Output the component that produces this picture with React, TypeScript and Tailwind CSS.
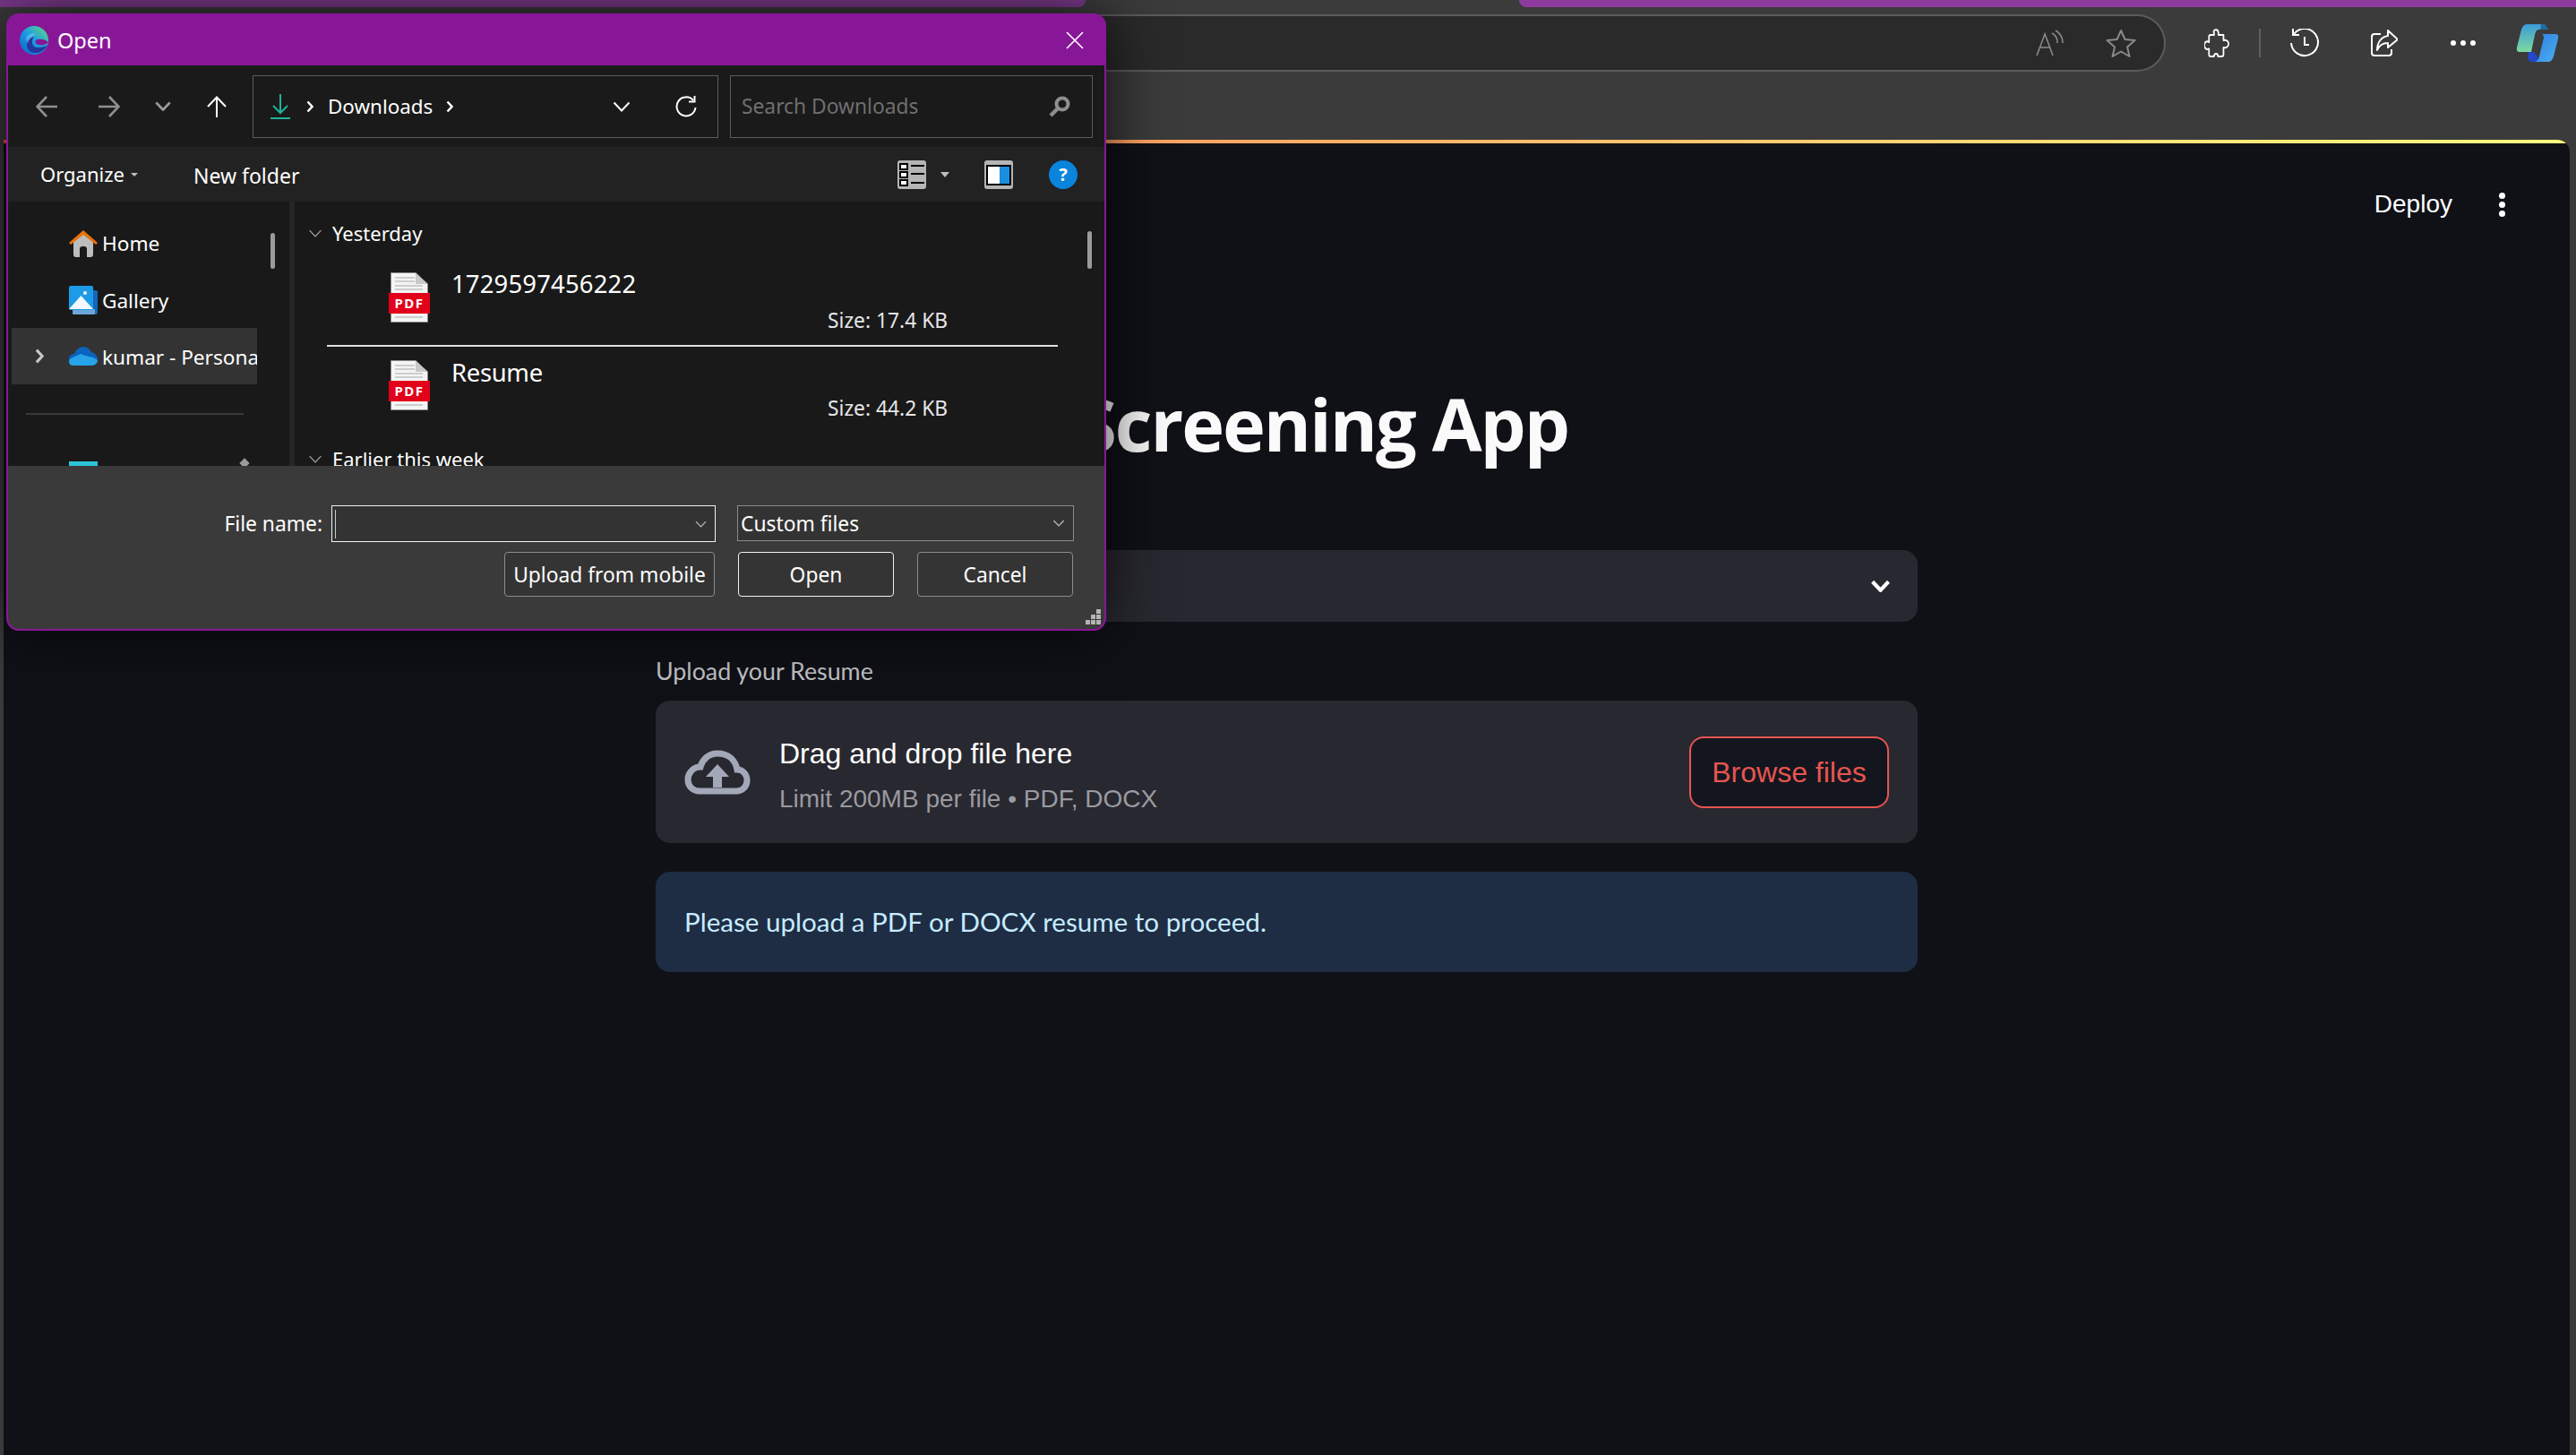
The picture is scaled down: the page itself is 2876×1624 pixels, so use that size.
function Chevron({ className = "", stroke = "currentColor", width = 2 }: { className?: string; stroke?: string; width?: number }) {
  return (
    <svg className={className} viewBox="0 0 20 12" fill="none">
      <path d="M1.5 1.5 10 10.5 18.5 1.5" stroke={stroke} strokeWidth={width} />
    </svg>
  );
}

function ChevronRight({ className = "" }: { className?: string }) {
  return (
    <svg className={className} viewBox="0 0 8 14" fill="none">
      <path d="M1.5 1.5 6.5 7 1.5 12.5" stroke="currentColor" strokeWidth="2.4" />
    </svg>
  );
}

function EdgeLogo() {
  return (
    <svg className="w-[32px] h-[32px]" viewBox="0 0 32 32">
      <defs>
        <linearGradient id="edgeA" x1="0" y1="1" x2="1" y2="0">
          <stop offset="0" stopColor="#0b62c4" />
          <stop offset="0.5" stopColor="#1b9de2" />
          <stop offset="1" stopColor="#63dd7c" />
        </linearGradient>
      </defs>
      <circle cx="16" cy="16" r="16" fill="url(#edgeA)" />
      <path d="M31 21C27 30 16 33 10 27 5 21 9 13 16 12 12 17 14 24 20 24 25 24 29 23 31 21Z" fill="#23389f" />
      <path d="M32 18C30 21 25 22 21 21 17 20 16 16 20 15 24 14 29 15 32 18Z" fill="#881798" />
      <path d="M7 13C9 9 14 7 19 9 15 10 11 14 9 20 8 18 7 15 7 13Z" fill="#e8f8ff" opacity="0.25" />
    </svg>
  );
}

function HomeIcon() {
  return (
    <svg className="w-[32px] h-[30px]" viewBox="0 0 32 30">
      <path d="M5 13 16 3 27 13V27Q27 30 24 30H20V21Q20 18 17 18H15Q12 18 12 21V30H8Q5 30 5 27Z" fill="#bdbdbd" />
      <path d="M0 14 16 0 32 14 30 16 16 5 2 16Z" fill="#e8730c" />
    </svg>
  );
}

function GalleryIcon() {
  return (
    <svg className="w-[32px] h-[32px]" viewBox="0 0 32 32">
      <rect x="4" y="5" width="28" height="27" rx="2" fill="#1566b8" />
      <rect x="4" y="26" width="25" height="6" rx="1" fill="#6ea4da" />
      <rect x="0" y="0" width="27" height="27" rx="2" fill="#1e9be8" />
      <path d="M0 26 13.5 11 27 26Z" fill="#f2f8fd" />
      <circle cx="18" cy="8" r="2" fill="#f2f8fd" />
    </svg>
  );
}

function CloudIcon() {
  return (
    <svg className="w-[32px] h-[21px]" viewBox="0 0 32 21">
      <path d="M7 21C2 21 0 17 0 14 0 10 3 8 6 8 8 3 12 0 16 0 20 0 23 2 25 6 29 7 32 10 32 14 32 18 29 21 25 21Z" fill="#0a64bd" />
      <path d="M4 21C1 21 0 18 0 16 1 12 8 11 13 8 19 11 28 11 32 15 32 18 29 21 25 21Z" fill="#27a3ea" />
    </svg>
  );
}

function PdfFile() {
  return (
    <div className="relative w-[46px] h-[56px] shrink-0">
      <svg className="absolute left-[2px] top-0 w-[42px] h-[56px]" viewBox="0 0 42 56">
        <path d="M.5.5H28L41.5 13V55.5H.5Z" fill="#f4f4f4" stroke="#8b8b8b" />
        <path d="M28 .5V13H41.5Z" fill="#c9c9c9" />
        <path d="M5 6H27M5 10H27M5 15H36M5 19H36M5 50H36" stroke="#a8a8a8" strokeWidth="1" />
      </svg>
      <div className="absolute left-0 top-[23px] w-[46px] h-[23px] bg-[#e2001a] flex items-center justify-center text-white text-[15px] font-bold tracking-[1.5px] font-['Noto_Sans',sans-serif] leading-none">
        PDF
      </div>
    </div>
  );
}

function FileRow({ name, size, nameTop }: { name: string; size: string; nameTop: string }) {
  return (
    <div className="flex h-[96px] ml-[36px] w-[816px] pl-[69px]">
      <div className="mt-[15px]">
        <PdfFile />
      </div>
      <div className={`ml-[24px] w-[420px] text-[27.4px] leading-[36px] text-white ${nameTop}`}>{name}</div>
      <div className="pt-[54px] text-[22.8px] leading-[30px] text-[#e6e6e6]">{size}</div>
    </div>
  );
}

function SideRow({ icon, label, selected, textTop }: { icon: React.ReactNode; label: string; selected?: boolean; textTop: string }) {
  return (
    <div className={`flex items-center h-[63px] w-[274px] ml-[4px] overflow-hidden whitespace-nowrap ${selected ? "bg-[#333333]" : ""}`}>
      <div className="w-[64px] shrink-0 pl-[26px] text-[#c8c8c8]">{selected && <ChevronRight className="w-[10px] h-[23px]" />}</div>
      <div className="w-[32px] shrink-0 flex justify-center">{icon}</div>
      <span className={`ml-[5px] text-[22.6px] text-white ${textTop}`}>{label}</span>
    </div>
  );
}

function FileDialog() {
  return (
    <div className="absolute left-[7px] top-[15px] w-[1228px] h-[689px] rounded-[14px] border-2 border-[#881798] bg-[#881798] overflow-hidden shadow-[0_0_70px_rgba(0,0,0,0.75)] font-['Noto_Sans',sans-serif] flex flex-col">
      <div className="h-[56px] flex items-center bg-[#881798] text-white shrink-0">
        <div className="ml-[13px]">
          <EdgeLogo />
        </div>
        <span className="ml-[10px] mt-[2px] text-[23.5px]">Open</span>
        <svg className="ml-auto mr-[23px] w-[20px] h-[20px]" viewBox="0 0 20 20" fill="none">
          <path d="M1 1 19 19M19 1 1 19" stroke="white" strokeWidth="1.6" />
        </svg>
      </div>

      <div className="h-[91px] bg-[#1a1a1a] flex items-center shrink-0">
        <svg className="ml-[31px] w-[24px] h-[24px]" viewBox="0 0 24 24" fill="none" stroke="#8f8f8f" strokeWidth="2.6">
          <path d="M24 12H2M12 1 1.5 12 12 23" />
        </svg>
        <svg className="ml-[46px] w-[24px] h-[24px]" viewBox="0 0 24 24" fill="none" stroke="#8f8f8f" strokeWidth="2.6">
          <path d="M0 12H22M12 1 22.5 12 12 23" />
        </svg>
        <Chevron className="ml-[39px] w-[18px] h-[11px] text-[#9a9a9a]" width={3} />
        <svg className="ml-[40px] w-[22px] h-[24px]" viewBox="0 0 22 24" fill="none" stroke="white" strokeWidth="2">
          <path d="M11 24V2M1 12 11 1.5 21 12" />
        </svg>
        <div className="ml-[29px] w-[520px] h-[70px] border border-[#5c5c5c] flex items-center text-white">
          <svg className="ml-[19px] w-[22px] h-[28px]" viewBox="0 0 22 28" fill="none" stroke="#1fb398" strokeWidth="2">
            <path d="M11 0V21M3 13 11 21 19 13M0 27H22" />
          </svg>
          <ChevronRight className="ml-[18px] w-[8px] h-[14px]" />
          <span className="ml-[16px] text-[22.4px]">Downloads</span>
          <ChevronRight className="ml-[15px] w-[8px] h-[14px]" />
          <Chevron className="ml-auto w-[20px] h-[12px]" />
          <svg className="ml-[50px] mr-[23px] w-[24px] h-[24px]" viewBox="0 0 24 24" fill="none" stroke="white" strokeWidth="2">
            <path d="M20 5A10.5 10.5 0 1 0 22.5 13" />
            <path d="M21.5 0V6.5H15" />
          </svg>
        </div>
        <div className="ml-[13px] w-[405px] h-[70px] border border-[#5c5c5c] flex items-center">
          <span className="ml-[12px] mt-[2px] text-[22.8px] text-[#6f6f6f]">Search Downloads</span>
          <svg className="ml-auto mr-[24px] w-[24px] h-[24px]" viewBox="0 0 24 24" fill="none" stroke="#8e8e8e">
            <circle cx="15" cy="9" r="6.5" strokeWidth="4" />
            <path d="M10 14 2 22" strokeWidth="4.5" />
          </svg>
        </div>
      </div>

      <div className="h-[61px] bg-[#222222] flex items-center text-[23px] text-white shrink-0">
        <span className="ml-[36px] text-[22px]">Organize</span>
        <div className="ml-[7px] w-0 h-0 border-x-[4px] border-x-transparent border-t-[4px] border-t-[#bdbdbd]" />
        <span className="ml-[62px] mt-[3px]">New folder</span>
        <svg className="ml-auto w-[32px] h-[32px]" viewBox="0 0 32 32">
          <rect width="32" height="32" rx="3" fill="#b5b5b5" />
          <g fill="#ffffff" stroke="#000000" strokeWidth="2">
            <rect x="3" y="4" width="8" height="6" />
            <rect x="3" y="13" width="8" height="6" />
            <rect x="3" y="22" width="8" height="6" />
          </g>
          <path d="M15 6H30M15 15H30M15 25H30" stroke="#000000" strokeWidth="2" />
        </svg>
        <div className="ml-[16px] w-0 h-0 border-x-[5px] border-x-transparent border-t-[6px] border-t-[#bdbdbd]" />
        <svg className="ml-[39px] w-[32px] h-[32px]" viewBox="0 0 32 32">
          <rect width="32" height="32" rx="3" fill="#b5b5b5" />
          <rect x="2" y="5" width="28" height="23" fill="#000000" />
          <rect x="4" y="7" width="13" height="19" fill="#ffffff" />
          <rect x="17" y="7" width="11" height="19" fill="#1a8fe0" />
        </svg>
        <div className="ml-[40px] mr-[30px] w-[32px] h-[32px] rounded-full bg-[#0a84dc] flex items-center justify-center text-white text-[20px] font-bold leading-none">
          ?
        </div>
      </div>

      <div className="h-[295px] bg-[#191919] flex shrink-0 overflow-hidden text-white">
        <div className="relative w-[314px] shrink-0 pt-[15px]">
          <SideRow icon={<HomeIcon />} label="Home" textTop="mt-0" />
          <SideRow icon={<GalleryIcon />} label="Gallery" textTop="mt-[2px]" />
          <SideRow icon={<CloudIcon />} label="kumar - Personal" textTop="mt-[2px]" selected />
          <div className="mt-[32px] ml-[20px] w-[243px] h-[2px] bg-[#3a3a3a]" />
          <div className="mt-[52px] ml-[4px] flex items-center h-[32px] whitespace-nowrap">
            <div className="ml-[64px] w-[32px] h-[32px] bg-[#2ec4d8]" />
            <span className="ml-[6px] -mt-[6px] text-[22.6px]">Desktop</span>
          </div>
          <div className="absolute left-[293px] top-[35px] w-[5px] h-[40px] rounded-full bg-[#9b9b9b]" />
          <div className="absolute left-[260px] top-[288px] w-[8px] h-[8px] rotate-45 bg-[#9b9b9b]" />
        </div>
        <div className="w-[6px] shrink-0 bg-[#262626]" />
        <div className="relative flex-1 pt-[20px] whitespace-nowrap">
          <div className="flex items-center h-[30px] pl-[15px] text-[22px] text-white">
            <Chevron className="w-[16px] h-[9px] text-[#a8a8a8]" width={1.6} />
            <span className="ml-[11px]">Yesterday</span>
          </div>
          <div className="mt-[14px]">
            <FileRow name="1729597456222" size="Size: 17.4 KB" nameTop="pt-[10px] tracking-[0.2px]" />
            <div className="ml-[36px] w-[816px] h-[2px] bg-[#e0e0e0]" />
            <FileRow name="Resume" size="Size: 44.2 KB" nameTop="pt-[11px] tracking-[-0.3px]" />
          </div>
          <div className="mt-[14px] flex items-center h-[30px] pl-[15px] text-[22px] text-white">
            <Chevron className="w-[16px] h-[9px] text-[#a8a8a8]" width={1.6} />
            <span className="ml-[11px]">Earlier this week</span>
          </div>
          <div className="absolute left-[885px] top-[33px] w-[5px] h-[42px] rounded-full bg-[#9b9b9b]" />
        </div>
      </div>

      <div className="relative h-[182px] bg-[#3a3a3a] pt-[44px] text-[22.8px] text-white shrink-0 rounded-b-[12px]">
        <div className="flex items-start">
          <div className="w-[351px] h-[41px] pt-[2px] flex items-center justify-end">File name:</div>
          <div className="relative ml-[10px] w-[429px] h-[41px] border border-[#f2f2f2] bg-[#333333] flex items-center">
            <div className="ml-[3px] w-[1px] h-[32px] bg-[#c8c8c8]" />
            <Chevron className="ml-auto mr-[9px] w-[13px] h-[8px] text-[#bdbdbd]" width={1.8} />
          </div>
          <div className="ml-[24px] w-[376px] h-[40px] border border-[#8c8c8c] bg-[#333333] flex items-center">
            <span className="ml-[3px] mt-[2px]">Custom files</span>
            <Chevron className="ml-auto mr-[9px] w-[14px] h-[8px] text-[#bdbdbd]" width={1.8} />
          </div>
        </div>
        <div className="flex mt-[11px] ml-[554px]">
          <div className="w-[235px] h-[50px] pt-[2px] rounded-[4px] border border-[#8c8c8c] bg-[#343434] flex items-center justify-center">Upload from mobile</div>
          <div className="ml-[26px] w-[174px] h-[50px] pt-[2px] rounded-[4px] border border-[#f2f2f2] bg-[#343434] flex items-center justify-center">Open</div>
          <div className="ml-[26px] w-[174px] h-[50px] pt-[2px] rounded-[4px] border border-[#8c8c8c] bg-[#343434] flex items-center justify-center">Cancel</div>
        </div>
        <svg className="absolute right-[4px] bottom-[5px] w-[17px] h-[17px]" viewBox="0 0 17 17" fill="#b5b5b5">
          <rect x="12" y="0" width="5" height="5" />
          <rect x="6" y="6" width="5" height="5" />
          <rect x="12" y="6" width="5" height="5" />
          <rect x="0" y="12" width="5" height="5" />
          <rect x="6" y="12" width="5" height="5" />
          <rect x="12" y="12" width="5" height="5" />
        </svg>
      </div>
    </div>
  );
}

function BrowserTools() {
  return (
    <div className="flex items-center text-white">
      <svg className="w-[28px] h-[32px]" viewBox="0 0 32 32" preserveAspectRatio="none" fill="none" stroke="white" strokeWidth="2" strokeLinejoin="round">
        <path d="M12 3C13 0 18 1 18 4.5V7H24.5V13C28 12 31 14 31 17S28 22 24.5 21V29Q24.5 31 22 31H17.5C18 27 12 27 12.5 31H8Q6 31 6 29V22.5C2 24 0 21 0 18.5S2 13 6 15V9Q6 7 8 7H12.5C13 5.5 12 4.5 12 3Z" />
      </svg>
      <div className="ml-[33px] w-[2px] h-[32px] bg-[#5f5f5f]" />
      <svg className="ml-[33px] w-[32px] h-[32px]" viewBox="0 0 32 32" fill="none" stroke="white" strokeWidth="2">
        <path d="M4 6A15 15 0 1 1 1 16" />
        <path d="M3 0V7H10M16 9V18H21" />
      </svg>
      <svg className="ml-[58px] w-[30px] h-[30px]" viewBox="0 0 30 30" fill="none" stroke="white" strokeWidth="2" strokeLinejoin="round">
        <path d="M11 5H4Q1 5 1 8V26Q1 29 4 29H20Q23 29 23 26V22" />
        <path d="M19 1 30 11 19 20V15C13 15 9 18 7 23 7 14 12 8 19 7Z" />
      </svg>
      <div className="ml-[59px] flex gap-[5px]">
        <div className="w-[6px] h-[6px] rounded-full bg-white" />
        <div className="w-[6px] h-[6px] rounded-full bg-white" />
        <div className="w-[6px] h-[6px] rounded-full bg-white" />
      </div>
      <svg className="ml-[45px] w-[48px] h-[42px]" viewBox="0 0 48 42">
        <defs>
          <linearGradient id="copA" x1="0" y1="0" x2="0" y2="1">
            <stop offset="0" stopColor="#3a9bd8" />
            <stop offset="1" stopColor="#7ed9a0" />
          </linearGradient>
          <linearGradient id="copB" x1="0" y1="0" x2="1" y2="1">
            <stop offset="0" stopColor="#2f7fe0" />
            <stop offset="1" stopColor="#4ab0f0" />
          </linearGradient>
        </defs>
        <path d="M12 0H32L36 6 26 6C23 6 22 8 21 12L17 31H4Q0 31 1 26L6 6Q8 0 12 0Z" fill="url(#copA)" />
        <path d="M28 0H32L36 6 H27Z" fill="#1f6d9e" />
        <path d="M14 31H20L24 36 C25 40 26 42 24 42H18Q14 42 13 37Z" fill="#2446c8" />
        <path d="M29 11H44Q48 11 47 16L42 36Q40 42 36 42H20C23 42 25 40 26 36L31 15C31 13 30 12 29 11Z" fill="url(#copB)" />
      </svg>
    </div>
  );
}

export default function App() {
  return (
    <div className="relative w-[2876px] h-[1624px] overflow-hidden bg-[#3b3b3b] font-['Liberation_Sans',Arial,sans-serif]">
      <div className="flex h-[8px] justify-between">
        <div className="w-[1212px] rounded-br-[10px] bg-[#7d3a8e]" />
        <div className="w-[1180px] rounded-bl-[10px] bg-[#8e3b9f]" />
      </div>
      <div className="flex items-center h-[64px] mt-[8px]">
        <div className="ml-[700px] w-[1718px] h-[64px] rounded-r-[32px] border-y-2 border-r-2 border-[#5b5b5b] bg-[#2a2a2a] flex items-center justify-end">
          <svg className="w-[31px] h-[30px]" viewBox="0 0 31 30" fill="none" stroke="#8a8a8a" strokeWidth="1.6">
            <path d="M1 29 10 5 19 29M4 20H16" />
            <path d="M18 4C22 6 24 10 24 15M22 1C27 4 30 9 30 15" />
          </svg>
          <svg className="ml-[47px] mr-[31px] w-[34px] h-[32px]" viewBox="0 0 34 32" fill="none" stroke="#8a8a8a" strokeWidth="2" strokeLinejoin="round">
            <path d="M17 2 21.5 12 32.5 13 24 20.5 26.5 31 17 25.5 7.5 31 10 20.5 1.5 13 12.5 12Z" />
          </svg>
        </div>
        <div className="ml-[43px]">
          <BrowserTools />
        </div>
      </div>

      <div className="mt-[76px] ml-[4px] mr-[7px] h-[1468px] rounded-tr-[14px] overflow-hidden bg-[#0f1117] text-[#fafafa]">
        <div className="h-[4px] bg-gradient-to-r from-[#ff4b4b] to-[#fffd80]" />
        <div className="flex items-center justify-end h-[136px] pr-[72px]">
          <span className="text-[28px] text-white">Deploy</span>
          <div className="ml-[52px] flex flex-col gap-[3px]">
            <div className="w-[7px] h-[7px] rounded-full bg-white" />
            <div className="w-[7px] h-[7px] rounded-full bg-white" />
            <div className="w-[7px] h-[7px] rounded-full bg-white" />
          </div>
        </div>
        <div className="mx-auto w-[1409px]">
          <div className="h-[318px] pt-[122px]">
            <h1 className="w-[1019px] text-right text-[81px] leading-[110px] tracking-[-0.025em] font-bold text-[#fafafa] font-['Open_Sans',sans-serif] whitespace-nowrap">
              Screening App
            </h1>
          </div>
          <div className="h-[80px] rounded-[16px] bg-[#282830] flex items-center justify-end pr-[31px]">
            <Chevron className="w-[21px] h-[14px] text-white" width={4} />
          </div>
          <div className="mt-[37px] text-[26.8px] leading-[36px] text-[#c4c4c8] font-['Lato',sans-serif]">Upload your Resume</div>
          <div className="mt-[15px] h-[159px] rounded-[16px] bg-[#282830] flex items-center pl-[32px] pr-[32px]">
            <svg className="w-[74px] h-[50px]" viewBox="0 0 74 50" fill="none">
              <path d="M17 46H58C65 46 70 41 70 34 70 27 65 22 59 22 57 11 49 4 37 4 27 4 20 11 18 19 10 19 4 26 4 33 4 41 10 46 17 46Z" stroke="#a3a8b8" strokeWidth="7" />
              <path d="M37 16 50 30H42V42H32V30H24Z" fill="#a3a8b8" />
            </svg>
            <div className="ml-[32px]">
              <div className="text-[32px] leading-[40px] text-white mt-[8px]">Drag and drop file here</div>
              <div className="text-[28px] leading-[36px] mt-[13px] text-[#9a9aa0]">Limit 200MB per file • PDF, DOCX</div>
            </div>
            <div className="ml-auto w-[223px] h-[80px] rounded-[16px] border-2 border-[#e8554f] bg-[#13161f] flex items-center justify-center text-[32px] text-[#e8554f]">
              Browse files
            </div>
          </div>
          <div className="mt-[32px] h-[112px] rounded-[16px] bg-[#1e2d44] flex items-center pl-[32px] text-[29.6px] text-[#c7ebff] font-['Lato',sans-serif]">
            Please upload a PDF or DOCX resume to proceed.
          </div>
        </div>
      </div>

      <FileDialog />
    </div>
  );
}
